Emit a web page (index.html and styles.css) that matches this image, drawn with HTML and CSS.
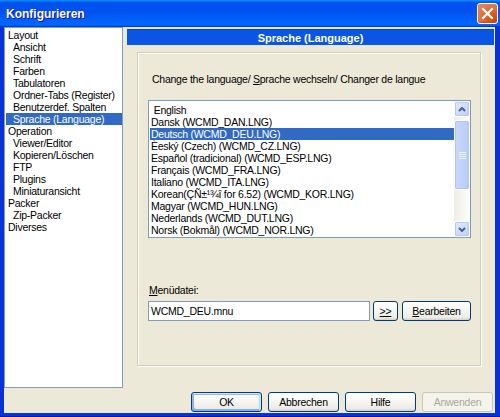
FILE: index.html
```html
<!DOCTYPE html>
<html lang="de">

<head>
  <meta charset="UTF-8">
  <title>Konfigurieren</title>
  <link rel="stylesheet" href="styles.css">
</head>

<body>
  <div class="window">
    <div class="titlebar">
      <span class="title">Konfigurieren</span>
      <button class="close-btn" aria-label="Schließen">
        <svg width="13" height="13" viewBox="0 0 13 13">
          <path d="M2 2 L11 11 M11 2 L2 11" stroke="#fff" stroke-width="2.2" stroke-linecap="square" fill="none" />
        </svg>
      </button>
    </div>

    <div class="client">
      <div class="main">
        <!-- Baum links -->
        <ul class="tree">
          <li>Layout</li>
          <li class="child">Ansicht</li>
          <li class="child">Schrift</li>
          <li class="child">Farben</li>
          <li class="child">Tabulatoren</li>
          <li class="child">Ordner-Tabs (Register)</li>
          <li class="child">Benutzerdef. Spalten</li>
          <li class="child selected">Sprache (Language)</li>
          <li>Operation</li>
          <li class="child">Viewer/Editor</li>
          <li class="child">Kopieren/Löschen</li>
          <li class="child">FTP</li>
          <li class="child">Plugins</li>
          <li class="child">Miniaturansicht</li>
          <li>Packer</li>
          <li class="child">Zip-Packer</li>
          <li>Diverses</li>
        </ul>

        <!-- Seite rechts -->
        <div class="page">
          <div class="page-header">Sprache (Language)</div>
          <div class="group">
            <p class="hint">Change the language/ <u>S</u>prache wechseln/ Changer de langue</p>

            <div class="listbox">
              <ul class="list-items">
                <li>&nbsp;English</li>
                <li>Dansk (WCMD_DAN.LNG)</li>
                <li class="selected">Deutsch (WCMD_DEU.LNG)</li>
                <li>Èeský (Czech) (WCMD_CZ.LNG)</li>
                <li>Español (tradicional) (WCMD_ESP.LNG)</li>
                <li>Français (WCMD_FRA.LNG)</li>
                <li>Italiano (WCMD_ITA.LNG)</li>
                <li>Korean(ÇÑ±¹¾î for 6.52) (WCMD_KOR.LNG)</li>
                <li>Magyar (WCMD_HUN.LNG)</li>
                <li>Nederlands (WCMD_DUT.LNG)</li>
                <li>Norsk (Bokmål) (WCMD_NOR.LNG)</li>
              </ul>
              <div class="scrollbar">
                <div class="sb-btn">
                  <svg width="8" height="5" viewBox="0 0 8 5">
                    <polyline points="1,4 4,1 7,4" stroke="#4d6185" stroke-width="2" fill="none" />
                  </svg>
                </div>
                <div class="sb-thumb">
                  <span class="grip"></span>
                </div>
                <div class="sb-track"></div>
                <div class="sb-btn">
                  <svg width="8" height="5" viewBox="0 0 8 5">
                    <polyline points="1,1 4,4 7,1" stroke="#4d6185" stroke-width="2" fill="none" />
                  </svg>
                </div>
              </div>
            </div>

            <label class="field-label" for="menu-file"><u>M</u>enüdatei:</label>
            <div class="field-row">
              <input type="text" id="menu-file" class="text-input" value="WCMD_DEU.mnu">
              <button class="btn btn-browse"><u>&gt;&gt;</u></button>
              <button class="btn btn-edit"><u>B</u>earbeiten</button>
            </div>
          </div>
        </div>
      </div>

      <div class="buttons">
        <button class="btn btn-default">OK</button>
        <button class="btn">Abbrechen</button>
        <button class="btn">Hilfe</button>
        <button class="btn" disabled>Anwenden</button>
      </div>
    </div>
  </div>
</body>

</html>
```

FILE: styles.css
```css
* {
  margin: 0;
  padding: 0;
  box-sizing: border-box;
}

body {
  font-family: "Liberation Sans", Arial, sans-serif;
  font-size: 10.5px;
  letter-spacing: -0.25px;
  color: #000;
  background-color: #ece9d8;
}

.window {
  width: 500px;
  height: 417px;
  display: flex;
  flex-direction: column;
  background-color: #0831d9;
  border-bottom: 1px solid #001ea0;
}

/* Titelleiste */
.titlebar {
  height: 27px;
  flex-shrink: 0;
  display: flex;
  align-items: center;
  justify-content: space-between;
  padding: 0 2px 0 6px;
  background: linear-gradient(to bottom, #0997ff 0%, #0053ee 9%, #0050ee 40%, #0066ff 86%, #0066ff 92%, #005bff 95%, #003dd7 97%, #003dd7 100%);
}

.title {
  color: #fff;
  font-size: 12px;
  font-weight: bold;
  letter-spacing: 0;
  text-shadow: 1px 1px #0f1089;
}

.close-btn {
  width: 21px;
  height: 21px;
  display: flex;
  align-items: center;
  justify-content: center;
  border: 1px solid #fff;
  border-radius: 3px;
  background: radial-gradient(circle at 85% 85%, #cc4600 0%, #dc6527 40%, #e27952 70%, #e3876c 100%);
  box-shadow: inset 0 -1px 1px #da4615;
}

/* Arbeitsbereich */
.client {
  flex: 1;
  margin: 0 5px 3px 4px;
  padding-right: 1px;
  background-color: #ece9d8;
  display: flex;
  flex-direction: column;
}

.main {
  height: 361px;
  display: flex;
  gap: 4px;
}

.tree {
  width: 121px;
  list-style: none;
  padding-top: 1px;
  background-color: #fff;
  border: 1px solid #7f9db9;
}

.tree li {
  height: 12px;
  line-height: 12px;
  padding-left: 3px;
  white-space: nowrap;
}

.tree .child {
  padding-left: 8px;
}

.tree .selected {
  margin-left: 1px;
  padding-left: 7px;
  background-color: #316ac5;
  color: #fff;
}

.page {
  flex: 1;
  display: flex;
  flex-direction: column;
}

.page-header {
  margin-top: 2px;
  height: 16px;
  line-height: 16px;
  text-align: center;
  font-size: 11px;
  font-weight: bold;
  letter-spacing: 0;
  color: #fff;
  background-color: #0a55e3;
  border-top: 1px solid #0745c0;
}

.group {
  margin: 7px 13px 0 10px;
  height: 314px;
  padding: 20px 9px 0 10px;
  border: 1px solid #d0cdbb;
  box-shadow: inset 1px 1px #fff, 1px 1px #fff;
}

.hint {
  line-height: 12px;
  padding-left: 4px;
}

/* Listenfeld */
.listbox {
  margin-top: 15px;
  height: 138px;
  display: flex;
  background-color: #fff;
  border: 1px solid #7f9db9;
}

.list-items {
  flex: 1;
  list-style: none;
  padding: 3px 0 0 1px;
  overflow: hidden;
}

.list-items li {
  height: 12px;
  line-height: 12px;
  padding-left: 1px;
  white-space: nowrap;
}

.list-items .selected {
  background-color: #316ac5;
  color: #fff;
}

.scrollbar {
  width: 16px;
  display: flex;
  flex-direction: column;
  background: linear-gradient(to right, #eeede5, #fefefb);
}

.sb-btn {
  height: 16px;
  display: flex;
  align-items: center;
  justify-content: center;
  border: 1px solid #fff;
  border-radius: 2px;
  background: linear-gradient(135deg, #e2eafe, #bccff9);
  box-shadow: inset 0 0 0 1px #b7c9f2;
}

.sb-thumb {
  margin-top: 3px;
  height: 70px;
  display: flex;
  align-items: center;
  justify-content: center;
  border: 1px solid #fff;
  border-radius: 2px;
  background: linear-gradient(to right, #c9d8fc, #b8ccf9);
  box-shadow: inset 0 0 0 1px #b1c5f1;
}

.grip {
  width: 7px;
  height: 7px;
  background: repeating-linear-gradient(to bottom, #eef3fe 0, #eef3fe 1px, transparent 1px, transparent 2px);
}

.sb-track {
  flex: 1;
}

/* Menüdatei */
.field-label {
  display: block;
  margin-top: 46px;
  line-height: 12px;
  padding-left: 1px;
}

.field-row {
  margin-top: 5px;
  display: flex;
  align-items: center;
}

.text-input {
  width: 222px;
  height: 20px;
  padding-left: 2px;
  font: inherit;
  letter-spacing: inherit;
  background-color: #fff;
  border: 1px solid #7f9db9;
  outline: none;
}

/* Schaltflächen */
.btn {
  width: 71px;
  height: 20px;
  font: inherit;
  letter-spacing: inherit;
  color: #000;
  border: 1px solid #003c74;
  border-radius: 3px;
  background: linear-gradient(to bottom, #fff 0%, #f7f7f4 40%, #ecebe6 86%, #d6d0c5 100%);
}

.btn u {
  text-underline-offset: 1px;
}

.btn-browse {
  width: 25px;
  margin-left: 3px;
}

.btn-edit {
  width: 69px;
  margin-left: 4px;
}

.btn-default {
  box-shadow: inset -1px 1px #cee7ff, inset 1px 2px #98b8ea, inset -2px 2px #bcd4f6, inset 1px -1px #89ade4, inset 2px -2px #89ade4;
}

.btn:disabled {
  color: #aca899;
  border-color: #c9c7ba;
  background: #f5f4ea;
}

.buttons {
  margin-top: 4px;
  display: flex;
  justify-content: flex-end;
  gap: 6px;
  padding-right: 1px;
}
```
